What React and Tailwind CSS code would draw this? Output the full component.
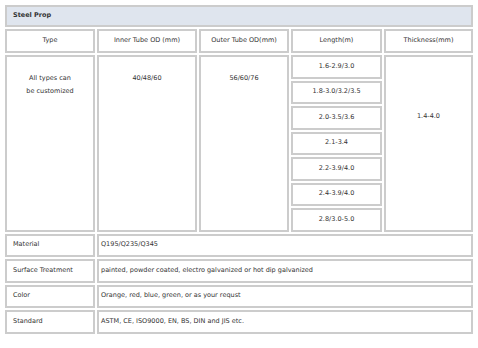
const lengths = [
  '1.6-2.9/3.0',
  '1.8-3.0/3.2/3.5',
  '2.0-3.5/3.6',
  '2.1-3.4',
  '2.2-3.9/4.0',
  '2.4-3.9/4.0',
  '2.8/3.0-5.0',
];

const rowStarts = ['row-start-2', 'row-start-3', 'row-start-4', 'row-start-5', 'row-start-6', 'row-start-7', 'row-start-8'];

const specs = [
  { label: 'Material', value: 'Q195/Q235/Q345', row: 'row-start-9' },
  { label: 'Surface Treatment', value: 'painted, powder coated, electro galvanized or hot dip galvanized', row: 'row-start-10' },
  { label: 'Color', value: 'Orange, red, blue, green, or as your requst', row: 'row-start-11' },
  { label: 'Standard', value: 'ASTM, CE, ISO9000, EN, BS, DIN and JIS etc.', row: 'row-start-12' },
];

const cell = 'border-2 border-[#cccccc] bg-white';

export default function App() {
  return (
    <div className="w-[478px] h-[348px] bg-white p-[5px] font-['DejaVu_Sans',sans-serif] text-[6.5px] text-[#333333]">
      {/* Title bar */}
      <div className="h-[22px] border-2 border-[#cccccc] bg-[#dfe5ee] flex items-center pl-[6px] font-bold">
        Steel Prop
      </div>

      {/* Spec table */}
      <div className="mt-[2px] grid grid-cols-[90px_100px_90px_91px_89px] grid-rows-[24px_repeat(11,23.5px)] gap-[2px]">
        {['Type', 'Inner Tube OD (mm)', 'Outer Tube OD(mm)', 'Length(m)', 'Thickness(mm)'].map((h) => (
          <div key={h} className={`${cell} row-start-1 flex items-center justify-center`}>
            {h}
          </div>
        ))}

        <div className={`${cell} col-start-1 row-start-2 row-span-7 pt-[15px] text-center leading-[13px]`}>
          All types can
          <br />
          be customized
        </div>
        <div className={`${cell} col-start-2 row-start-2 row-span-7 pt-[15px] text-center leading-[13px]`}>
          40/48/60
        </div>
        <div className={`${cell} col-start-3 row-start-2 row-span-7 pt-[15px] text-center leading-[13px]`}>
          56/60/76
        </div>
        {lengths.map((l, i) => (
          <div key={l} className={`${cell} col-start-4 ${rowStarts[i]} flex items-center justify-center`}>
            {l}
          </div>
        ))}
        <div className={`${cell} col-start-5 row-start-2 row-span-7 pt-[53px] text-center leading-[13px]`}>
          1.4-4.0
        </div>

        {specs.map((s) => (
          <div key={s.label} className="contents">
            <div className={`${cell} col-start-1 ${s.row} flex items-center pl-[6px]`}>{s.label}</div>
            <div className={`${cell} col-start-2 col-span-4 ${s.row} flex items-center pl-[2px]`}>{s.value}</div>
          </div>
        ))}
      </div>
    </div>
  );
}
